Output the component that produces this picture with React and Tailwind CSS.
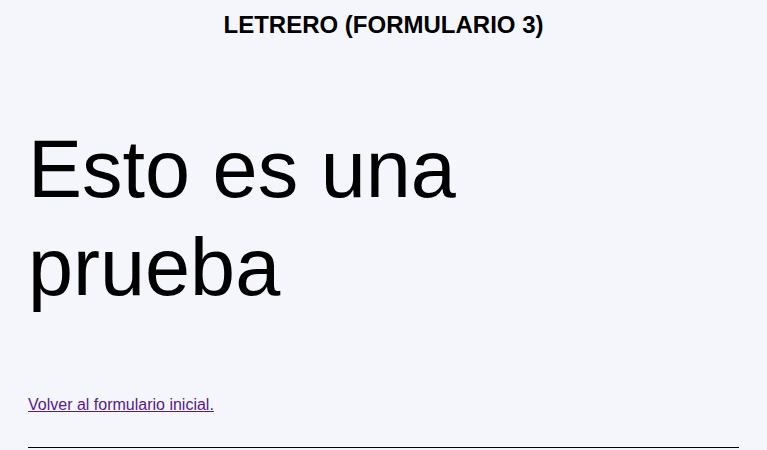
const App = () => {
  return (
    <div className="min-h-screen w-full bg-[#f5f6fb] px-[28px] text-black font-['Liberation_Sans',Arial,sans-serif]">
      {/* Heading */}
      <h1 className="pt-[11px] text-center text-[24px] font-bold leading-[28px]">
        LETRERO (FORMULARIO 3)
      </h1>

      {/* Sign text */}
      <p className="mt-[81px] max-w-[470px] text-[81px] leading-[98px]">
        Esto es una prueba
      </p>

      <a href="#" className="mt-[80px] block w-fit text-[16px] leading-[18px] text-[#551a8b] underline">
        Volver al formulario inicial.
      </a>

      <hr className="mt-[33px] border-t border-black" />
    </div>
  );
};

export default App;
